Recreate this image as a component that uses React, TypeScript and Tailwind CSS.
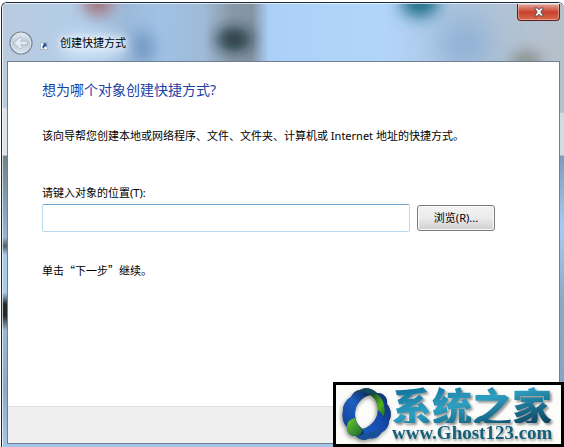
import React, { useState } from 'react';

// Desktop wallpaper as it shows through the glass frame
const GlassBackdrop: React.FC = () => (
  <svg
    className="absolute inset-0 h-full w-full"
    viewBox="0 0 562 445"
    preserveAspectRatio="none"
    aria-hidden="true"
  >
    <defs>
      <filter id="soft" filterUnits="userSpaceOnUse" x="-60" y="-60" width="680" height="240">
        <feGaussianBlur stdDeviation="8" />
      </filter>
      <filter id="softer" filterUnits="userSpaceOnUse" x="-60" y="-60" width="680" height="240">
        <feGaussianBlur stdDeviation="16" />
      </filter>
      <linearGradient id="base" x1="0" x2="1" y1="0" y2="0">
        <stop offset="0" stopColor="#b9cbdf" />
        <stop offset="0.14" stopColor="#b3cde9" />
        <stop offset="0.22" stopColor="#9dbada" />
        <stop offset="0.28" stopColor="#a0c2e6" />
        <stop offset="0.36" stopColor="#9fbad6" />
        <stop offset="0.41" stopColor="#8898a8" />
        <stop offset="0.445" stopColor="#8494a5" />
        <stop offset="0.475" stopColor="#abd0f7" />
        <stop offset="0.68" stopColor="#b2d5fa" />
        <stop offset="0.82" stopColor="#adc4dc" />
        <stop offset="1" stopColor="#b7c0ca" />
      </linearGradient>
      <linearGradient id="side" x1="0" x2="0" y1="0" y2="1">
        <stop offset="0" stopColor="#6f8489" />
        <stop offset="0.12" stopColor="#7d97ab" />
        <stop offset="0.28" stopColor="#98b5d2" />
        <stop offset="0.31" stopColor="#4d5f66" />
        <stop offset="0.34" stopColor="#a8caef" />
        <stop offset="0.47" stopColor="#a8caef" />
        <stop offset="0.51" stopColor="#232a2c" />
        <stop offset="0.55" stopColor="#232a2c" />
        <stop offset="0.6" stopColor="#9ab8d4" />
        <stop offset="0.8" stopColor="#8faac6" />
        <stop offset="1" stopColor="#a3c6eb" />
      </linearGradient>
      <linearGradient id="sideRight" x1="0" x2="0" y1="0" y2="1">
        <stop offset="0" stopColor="#7f9cba" />
        <stop offset="0.25" stopColor="#a6cbf3" />
        <stop offset="0.5" stopColor="#8ba7c2" />
        <stop offset="1" stopColor="#84a3c4" />
      </linearGradient>
    </defs>
    <rect width="562" height="445" fill="url(#base)" />
    <ellipse cx="96" cy="0" rx="15" ry="11" fill="#a0686a" filter="url(#soft)" />
    <ellipse cx="140" cy="44" rx="13" ry="16" fill="#7399c4" filter="url(#soft)" />
    <ellipse cx="92" cy="44" rx="34" ry="12" fill="#d3e6f8" filter="url(#soft)" />
    <ellipse cx="231" cy="36" rx="15" ry="7" fill="#11252b" filter="url(#soft)" />
    <ellipse cx="233" cy="37" rx="15" ry="7" fill="#20363c" filter="url(#soft)" />
    <ellipse cx="418" cy="0" rx="19" ry="14" fill="#1f6c86" filter="url(#soft)" />
    <ellipse cx="462" cy="40" rx="24" ry="22" fill="#86aad3" filter="url(#softer)" />
    <ellipse cx="524" cy="58" rx="15" ry="8" fill="#7d7e74" filter="url(#soft)" />
    <rect y="105" width="12" height="48" fill="#dde3e8" />
    <rect x="552" y="110" width="10" height="43" fill="#d3dbe2" />
    <rect y="153" width="12" height="292" fill="url(#side)" />
    <rect x="550" y="153" width="12" height="292" fill="url(#sideRight)" />
    <rect x="12" y="440" width="538" height="5" fill="#a3c4e6" />
  </svg>
);

const BackIcon: React.FC = () => (
  <svg className="h-6 w-6" viewBox="0 0 24 24" aria-hidden="true">
    <defs>
      <linearGradient id="orb" x1="0" x2="0" y1="0" y2="1">
        <stop offset="0" stopColor="#e4ecf4" />
        <stop offset="0.5" stopColor="#bccad8" />
        <stop offset="1" stopColor="#dbe7f1" />
      </linearGradient>
    </defs>
    <circle cx="12" cy="12" r="11" fill="url(#orb)" stroke="#7b8793" strokeWidth="1.2" />
    <circle cx="12" cy="12" r="9.8" fill="none" stroke="#e3ecf4" strokeWidth="0.8" />
    <path
      d="M4.8 12 11 6l2.400 2.200-2 2h7v3.600h-7l2 2L11 18z"
      fill="#e4ecf3"
      stroke="#a9b6c3"
      strokeWidth="0.8"
      strokeLinejoin="round"
    />
  </svg>
);

const ShortcutIcon: React.FC = () => (
  <svg className="h-2 w-2" viewBox="0 0 8 8" aria-hidden="true">
    <rect x="0.4" y="0.4" width="7.2" height="7.2" fill="#f6f9fc" stroke="#a7b2be" strokeWidth="0.8" />
    <path d="M2.600 1.200h4v4L5.400 4.200C4.400 4.800 3.800 5.600 3.600 7 1.800 6 2 4 3.800 2.600z" fill="#1d4f9c" />
  </svg>
);

const CloseIcon: React.FC = () => (
  <svg className="h-3 w-3" viewBox="0 0 12 12" aria-hidden="true">
    <path
      d="M1.500 2h3L6 3.800 7.500 2h3L7.800 6l2.700 4h-3L6 8.200 4.500 10h-3l2.700-4z"
      fill="#f7f7f7"
      stroke="#5b4650"
      strokeWidth="0.9"
      strokeLinejoin="round"
    />
  </svg>
);

const Emblem: React.FC = () => (
  <svg className="h-[54px] w-[50px] shrink-0 overflow-visible" viewBox="0 0 50 54" aria-hidden="true">
    <defs>
      <linearGradient id="blueLeft" x1="0" x2="1" y1="1" y2="0">
        <stop offset="0" stopColor="#123f9c" />
        <stop offset="0.55" stopColor="#1d5fbe" />
        <stop offset="1" stopColor="#0c2350" />
      </linearGradient>
      <linearGradient id="blueRight" x1="1" x2="0" y1="0" y2="1">
        <stop offset="0" stopColor="#0f2f66" />
        <stop offset="0.5" stopColor="#1748ae" />
        <stop offset="1" stopColor="#1e62c4" />
      </linearGradient>
      <linearGradient id="greenTop" x1="0" x2="1" y1="0" y2="1">
        <stop offset="0" stopColor="#0d3b28" />
        <stop offset="0.6" stopColor="#4fb31c" />
        <stop offset="1" stopColor="#1f6a2a" />
      </linearGradient>
      <linearGradient id="greenLow" x1="0" x2="1" y1="0" y2="1">
        <stop offset="0" stopColor="#6fce22" />
        <stop offset="1" stopColor="#15603a" />
      </linearGradient>
    </defs>
    <g className="drop-shadow-[-1px_2px_2px_rgba(0,0,0,0.45)]">
      <path
        d="M18 2c5-3 12-2 17 3 6 0 11 4 10 11 4 5 5 11 2 17 0 5-3 9-7 11-4 5-8 7-12 6-5 3-11 2-14-2-6 0-9-3-9-9-4-4-5-10-4-16 0-6 3-11 8-14 2-4 5-7 9-7zM28 7c-9 2-15 10-15 19 0 6 2 11 8 15 9-3 15-11 15-19 0-7-3-13-8-15z"
        fill="#123a66"
        fillRule="evenodd"
      />
      <path d="M18 2c5-3 12-2 17 3-3 0-5 1-7 2-4-3-10-3-15 0 1-3 3-4 5-5z" fill="#14485c" />
      <path d="M28 7c4-3 8-1 11 3 4 5 5 11 3 18l-7-1c2-9-1-17-7-20z" fill="url(#greenTop)" />
      <path d="M35 5c6 0 11 4 10 11 4 5 5 11 2 17 0 5-3 9-7 11-4 5-8 7-12 6-4-1-6-4-7-9 9-3 15-11 15-19 3 2 5 5 6 9 2-10 0-20-7-26z" fill="url(#blueRight)" />
      <path d="M9 9c4-6 12-7 19-2-9 2-15 10-15 19 0 4 1 8 3 11-5 1-8 2-11 2-4-4-5-10-4-16 0-6 3-11 8-14z" fill="url(#blueLeft)" />
      <path d="M5 39c0-5 3-8 8-9 1 5 4 9 8 11-1 4-4 7-7 7-6 0-9-3-9-9z" fill="url(#greenLow)" />
      <path d="M14 48c5 0 9-3 14-4 4 0 8-1 12-4 0 8-7 12-12 10-5 3-11 2-14-2z" fill="#16519a" />
    </g>
  </svg>
);

const SiteBadge: React.FC = () => (
  <a
    href="#site"
    className="absolute right-0 bottom-0 flex h-[65px] w-[231px] items-center border-[3px] border-black bg-[#fcfcfa] pl-1.5"
  >
    <Emblem />
    <span className="flex flex-col whitespace-nowrap">
      <span className="bg-linear-to-br from-[#0d6d96] via-[#2d9fc2] via-45% to-[#0a3f5c] bg-clip-text font-['Noto_Sans_CJK_SC',sans-serif] text-[40px] leading-9 font-black text-transparent drop-shadow-[2px_2px_1px_rgba(0,0,0,0.4)]">
        系统之家
      </span>
      <span className="font-['Liberation_Serif',serif] text-[19px] leading-5 font-bold text-[#14607a] drop-shadow-[1px_2px_1px_rgba(0,0,0,0.35)]">
        www.Ghost123.com
      </span>
    </span>
  </a>
);

const App: React.FC = () => {
  const [location, setLocation] = useState('');

  return (
    <div className="relative flex min-h-screen flex-col bg-white pt-0.5 pl-px font-['Noto_Sans','Noto_Sans_CJK_SC',sans-serif] text-[11px] leading-4 text-black">
      <div className="relative flex flex-1 flex-col overflow-hidden rounded-t-md border-t border-l border-[#1b2836]">
        <GlassBackdrop />

        <div className="relative flex flex-1 flex-col border-t border-l border-white/70 pr-1 pb-[3px] pl-1">
          <header>
            <div className="flex justify-end">
              <button
                aria-label="关闭"
                className="flex h-[17px] w-[43px] items-center justify-center rounded-b border border-t-0 border-[#5e1f1c] bg-linear-to-b from-[#e0a79c] via-[#c8402b] to-[#d9694f] shadow-[inset_0_0_0_1px_rgba(255,255,255,0.35)]"
              >
                <CloseIcon />
              </button>
            </div>
            <div className="mt-2.5 flex h-6 items-center pl-0.5">
              <button aria-label="返回">
                <BackIcon />
              </button>
              <span className="mt-1.5 ml-[7px]">
                <ShortcutIcon />
              </span>
              <h1 className="ml-3 [text-shadow:0_0_6px_#fff,0_0_8px_#fff]">创建快捷方式</h1>
            </div>
          </header>

          <main className="mt-1.5 flex flex-1 flex-col border border-[#6f7f90] bg-white">
            <div className="flex-1 pt-4 pr-16 pl-[34px]">
              <h2 className="text-[14px] leading-6 text-[#1a3fa6]">想为哪个对象创建快捷方式?</h2>
              <p className="mt-[26px] whitespace-nowrap">
                该向导帮您创建本地或网络程序、文件、文件夹、计算机或 Internet 地址的快捷方式。
              </p>

              <label htmlFor="location" className="mt-[41px] block">
                请键入对象的位置(T):
              </label>
              <div className="mt-[3px] flex items-center gap-[7px]">
                <input
                  id="location"
                  type="text"
                  value={location}
                  onChange={e => setLocation(e.target.value)}
                  className="h-7 min-w-0 flex-1 rounded-xs border border-[#b9d8ee] border-t-[#6fa3cc] bg-white px-1 outline-none"
                />
                <button className="h-[26px] w-[78px] rounded-[3px] border border-[#7a7a7a] bg-linear-to-b from-[#f3f3f3] from-0% via-[#ebebeb] via-50% to-[#cfcfcf] shadow-[inset_0_0_0_1px_#fafafa]">
                  浏览(R)...
                </button>
              </div>

              <p className="mt-[30px] font-['Noto_Sans_CJK_SC',sans-serif]">单击“下一步”继续。</p>
            </div>
            <footer className="h-[37px] border-t border-[#dfdfdf] bg-[#efefef]" />
          </main>
        </div>
      </div>

      <SiteBadge />
    </div>
  );
};

export default App;
